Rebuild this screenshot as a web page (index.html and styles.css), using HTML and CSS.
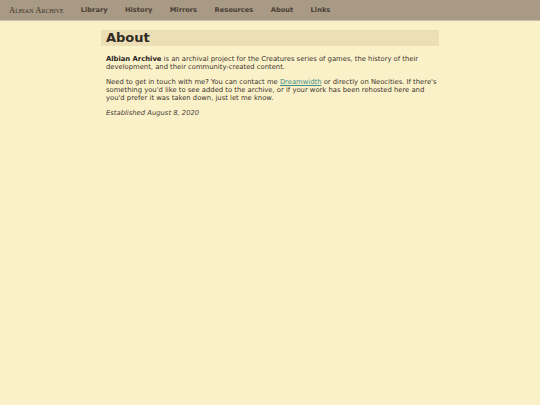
FILE: index.html
```html
<!DOCTYPE html>
<html>
<head>
<meta charset="utf-8">
<link rel="stylesheet" href="styles.css">
</head>
<body>
<nav class="topbar">
  <a class="logo" href="#">Albian Archive</a>
  <a class="navlink" href="#">Library</a>
  <a class="navlink" href="#">History</a>
  <a class="navlink" href="#">Mirrors</a>
  <a class="navlink" href="#">Resources</a>
  <a class="navlink" href="#">About</a>
  <a class="navlink" href="#">Links</a>
</nav>
<main class="content">
  <h1 class="title">About</h1>
  <div class="text">
    <p><strong>Albian Archive</strong> is an archival project for the Creatures series of games, the history of their development, and their community-created content.</p>
    <p>Need to get in touch with me? You can contact me <a class="link" href="#">Dreamwidth</a> or directly on Neocities. If there's something you'd like to see added to the archive, or if your work has been rehosted here and you'd prefer it was taken down, just let me know.</p>
    <p class="est">Established August 8, 2020</p>
  </div>
</main>
</body>
</html>
```
FILE: styles.css
```css
html, body {
  margin: 0;
  padding: 0;
  background: #fbf1c9;
  font-family: "DejaVu Sans", Verdana, sans-serif;
  color: #3a342c;
}
.topbar {
  display: flex;
  align-items: center;
  height: 20px;
  background: #a89a85;
  border-bottom: 1px solid #cdc0a6;
  padding-left: 9px;
}
.logo {
  font-family: "Liberation Serif", serif;
  font-variant: small-caps;
  font-size: 8.6px;
  color: #3e352b;
  text-decoration: none;
  margin-right: 17px;
}
.navlink {
  font-size: 6.7px;
  font-weight: bold;
  color: #4a4034;
  text-decoration: none;
  margin-right: 17.4px;
}
.content {
  width: 338px;
  margin: 9px 0 0 101px;
}
.title {
  margin: 0;
  background: #ecdfb5;
  font-size: 13px;
  line-height: 16px;
  padding: 0 5px;
  color: #2f2a24;
}
.text {
  padding: 9px 0 0 5px;
  font-size: 6.8px;
  line-height: 8px;
}
.text p {
  margin: 0 0 7px;
}
.text strong {
  color: #2a251f;
}
.link {
  color: #3f8d86;
}
.est {
  font-style: italic;
  color: #4a4238;
  margin-top: 8px;
}
```
